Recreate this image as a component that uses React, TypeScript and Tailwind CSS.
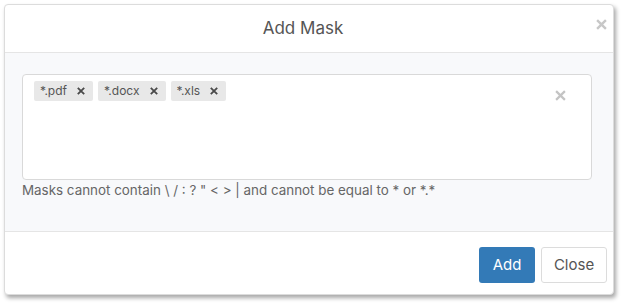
import React from "react";

const XIcon = ({ size = 10, stroke = 2, color = "#555" }: { size?: number; stroke?: number; color?: string }) => (
  <svg width={size} height={size} viewBox="0 0 10 10" fill="none">
    <path d="M1 1L9 9M9 1L1 9" stroke={color} strokeWidth={stroke} strokeLinecap="butt" />
  </svg>
);

const Tag = ({ label }: { label: string }) => (
  <div className="flex items-center h-[20px] bg-[#e8e8e8] rounded-[2px] pl-[6px] pr-[8px] text-[12px] text-[#555]">
    <span>{label}</span>
    <span className="ml-[10px] flex items-center">
      <XIcon size={8} stroke={2.3} color="#4a4a4a" />
    </span>
  </div>
);

export default function App() {
  return (
    <div className="w-[624px] h-[303px] bg-white pt-[4px] pl-[4px]" style={{ fontFamily: "Inter, 'Noto Sans', sans-serif" }}>
      <div className="w-[610px] h-[291px] border border-[#dcdcdc] rounded-[4px] bg-white flex flex-col overflow-hidden shadow-[2px_3px_4px_rgba(0,0,0,0.35)]">
        <div className="h-[48px] flex items-center border-b border-[#e5e5e5] shrink-0">
          <div className="flex-1 text-center text-[17px] text-[#555] pl-[6px]">Add Mask</div>
          <button className="w-[12px] h-[12px] mr-[6px] mb-[9px] flex items-center justify-center">
            <XIcon size={11} stroke={2.2} color="#c8c8c8" />
          </button>
        </div>
        <div className="flex-1 bg-[#f8f9fb] pl-[17px] pr-[21px] pt-[21px] border-b border-[#e5e5e5]">
          <div className="h-[106px] bg-white border border-[#d9d9d9] rounded-[4px] relative pl-[11px] pt-[6px]">
            <div className="flex gap-[5px]">
              <Tag label="*.pdf" />
              <Tag label="*.docx" />
              <Tag label="*.xls" />
            </div>
            <div className="absolute right-[25px] top-[15px]">
              <XIcon size={11} stroke={2} color="#c4c4c4" />
            </div>
          </div>
          <div className="text-[13.4px] text-[#666] mt-[1px] leading-[18px]">
            Masks cannot contain \ / : ? " &lt; &gt; | and cannot be equal to * or *.*
          </div>
        </div>
        <div className="h-[62px] shrink-0 flex items-start justify-end pt-[15px] pr-[6px] gap-[6px]">
          <button className="h-[36px] w-[56px] bg-[#337ab7] text-white text-[15px] rounded-[3px]">Add</button>
          <button className="h-[36px] w-[66px] bg-white border border-[#dcdcdc] text-[#555] text-[15px] rounded-[3px]">Close</button>
        </div>
      </div>
    </div>
  );
}
